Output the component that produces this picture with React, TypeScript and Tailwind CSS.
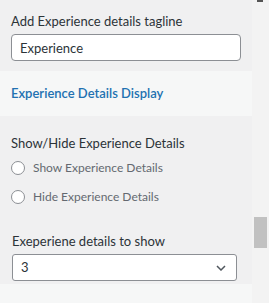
export default function App() {
  return (
    <div className="flex h-[303px] w-[269px] overflow-hidden bg-[#f0f0f1] font-['Lato',sans-serif]">
      <div className="flex w-[252px] flex-col">
        {/* Tagline field */}
        <div className="px-[11px] pt-[13px]">
          <label className="block text-[13px] leading-[17px] text-[#2c3338]">
            Add Experience details tagline
          </label>
          <input
            readOnly
            value="Experience"
            className="mt-[4px] h-[27px] w-[230px] rounded-[4px] border border-[#8c8f94] bg-white px-[8px] text-[13px] text-[#2c3338] outline-none"
          />
        </div>

        {/* Section heading */}
        <div className="mt-[10px] flex h-[45px] items-center bg-[#f6f7f7] px-[11px]">
          <h3 className="text-[13px] font-semibold text-[#2271b1]">
            Experience Details Display
          </h3>
        </div>

        {/* Show / hide */}
        <div className="px-[11px] pt-[19px]">
          <div className="text-[13px] leading-[17px] text-[#2c3338]">
            Show/Hide Experience Details
          </div>
          <div className="mt-[7px] flex flex-col gap-[12px]">
            {["Show Experience Details", "Hide Experience Details"].map((t) => (
              <label key={t} className="flex items-center gap-[8px]">
                <span className="h-[14px] w-[14px] rounded-full border border-[#8c8f94] bg-white" />
                <span className="text-[12px] leading-[17px] text-[#646970]">{t}</span>
              </label>
            ))}
          </div>
        </div>

        {/* Count */}
        <div className="px-[12px] pt-[28px]">
          <div className="text-[13px] leading-[17px] text-[#2c3338]">
            Exeperiene details to show
          </div>
          <div className="mt-[4px] flex h-[27px] w-[225px] items-center justify-between rounded-[3px] border border-[#8c8f94] bg-white pl-[8px] pr-[10px]">
            <span className="text-[13px] text-[#2c3338]">3</span>
            <svg width="10" height="6" viewBox="0 0 10 6" fill="none">
              <path d="M1 1l4 4 4-4" stroke="#50575e" strokeWidth="1.5" />
            </svg>
          </div>
        </div>

        <div className="mt-[3px] flex-1 bg-[#f6f7f7]" />
      </div>

      {/* Scrollbar */}
      <div className="relative w-[17px] bg-[#f3f3f3]">
        <div className="absolute left-[5px] top-0 h-[2px] w-[6px] bg-[#555]" />
        <div className="absolute left-[2px] top-[217px] h-[31px] w-[13px] bg-[#c1c1c1]" />
      </div>
    </div>
  );
}
